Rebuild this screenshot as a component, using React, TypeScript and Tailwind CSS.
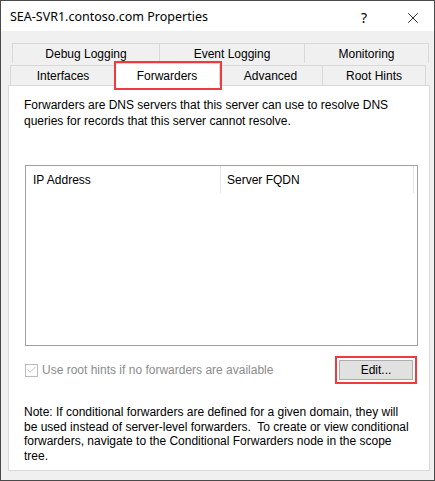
import { Check, X } from 'lucide-react';

const font = { fontFamily: '"Liberation Sans", Arial, sans-serif' };

function Tab({ label, w, selected = false }: { label: string; w: string; selected?: boolean }) {
  if (selected) {
    return (
      <div className={`relative z-10 -mx-[2px] -mb-px flex h-[23px] items-start justify-center border border-b-0 border-[#d9d9d9] bg-white pt-[3px] ${w}`}>
        <span>{label}</span>
        <div className="pointer-events-none absolute -left-[1px] -right-[3px] -top-[3px] -bottom-[4px] border-2 border-[#ef3b3f]" />
      </div>
    );
  }
  return (
    <div className={`flex h-[20px] items-center justify-center border border-b-0 border-[#d9d9d9] bg-[#f0f0f0] pt-px ${w}`}>
      {label}
    </div>
  );
}

export default function App() {
  return (
    <div className="flex h-[481px] w-[435px] flex-col border border-[#4a4a4a] bg-[#f0f0f0] text-[12px] text-black" style={font}>
      <div className="flex h-[30px] items-center bg-white pl-[9px] pt-[3px]">
        <span className="text-[12.5px]" style={{ fontFamily: '"Noto Sans", sans-serif' }}>
          SEA-SVR1.contoso.com Properties
        </span>
        <span className="ml-auto mr-[37px] text-[14px]" style={{ fontFamily: '"Noto Sans", sans-serif' }}>?</span>
        <X size={18} strokeWidth={1.1} className="mr-[12px]" />
      </div>

      <div className="flex flex-1 flex-col pb-[9px] pl-[7px] pr-[4px] pt-[12px]">
        <div className="ml-[4px] flex">
          <Tab label="Debug Logging" w="w-[148px]" />
          <Tab label="Event Logging" w="w-[146px] -ml-px" />
          <Tab label="Monitoring" w="w-[125px] -ml-px" />
        </div>
        <div className="ml-[2px] flex items-end">
          <Tab label="Interfaces" w="w-[106px]" />
          <Tab label="Forwarders" w="w-[106px]" selected />
          <Tab label="Advanced" w="w-[105px]" />
          <Tab label="Root Hints" w="w-[104px] -ml-px" />
        </div>

        <div className="flex flex-1 flex-col border border-[#d9d9d9] bg-white pl-[15px] pr-[11px] pt-[11px]">
          <p className="leading-[16px]">
            Forwarders are DNS servers that this server can use to resolve DNS queries for records that this server cannot resolve.
          </p>

          <div className="ml-px mt-[36px] h-[181px] border border-[#a0a0a0] bg-white">
            <div className="flex h-[27px] items-center">
              <div className="flex h-full w-[195px] items-center border-r border-[#e5e5e5] pl-[7px]">IP Address</div>
              <div className="flex h-full w-[193px] items-center border-r border-[#e5e5e5] pl-[6px]">Server FQDN</div>
            </div>
          </div>

          <div className="mt-[10px] flex items-center">
            <div className="ml-px flex h-[13px] w-[13px] items-center justify-center border border-[#bcbcbc] bg-white">
              <Check size={12} strokeWidth={2} color="#bcbcbc" />
            </div>
            <span className="ml-[4px] text-[#8c8c8c]">Use root hints if no forwarders are available</span>
            <div className="ml-auto mr-px border-2 border-[#ef3b3f] p-[2px]">
              <button className="flex h-[20px] w-[74px] items-center justify-center border border-[#adadad] bg-[#e1e1e1]">
                Edit...
              </button>
            </div>
          </div>

          <p className="mt-[21px] max-w-[390px] leading-[14.5px]">
            Note: If conditional forwarders are defined for a given domain, they will be used instead of server-level forwarders.&nbsp; To create or view conditional forwarders, navigate to the Conditional Forwarders node in the scope tree.
          </p>
        </div>
      </div>
    </div>
  );
}
